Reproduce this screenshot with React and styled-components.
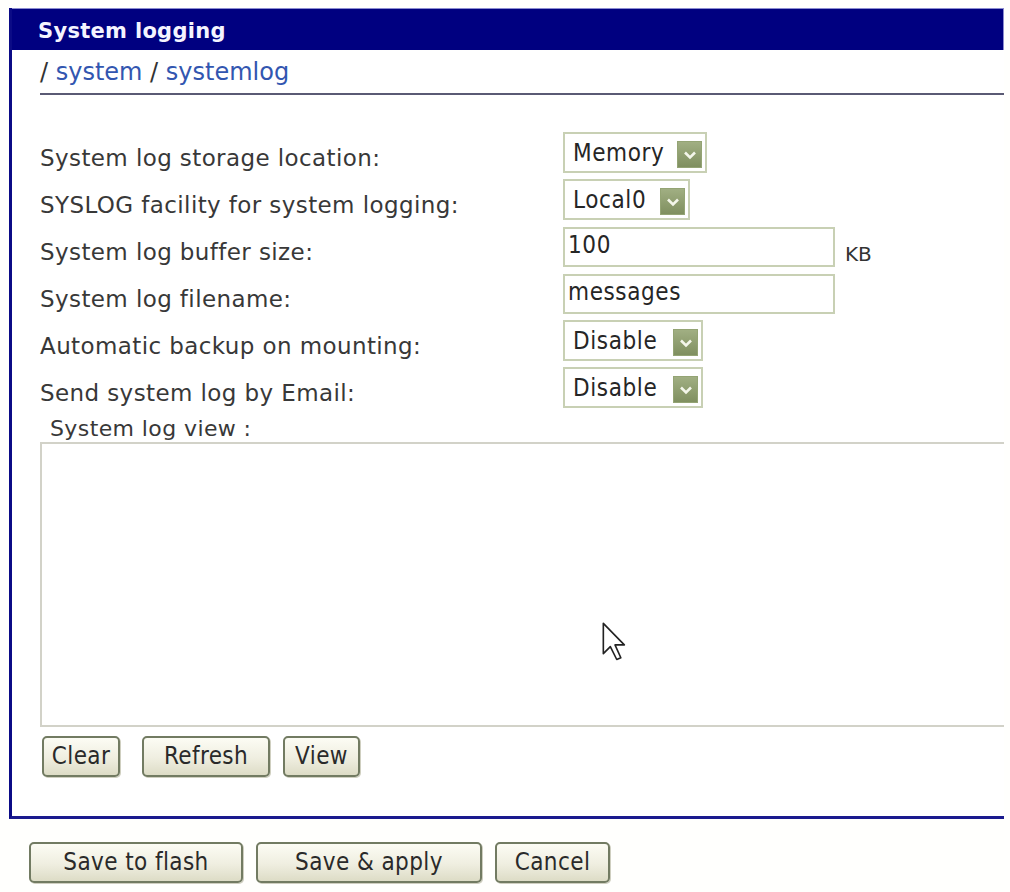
import React from 'react';
import styled, { createGlobalStyle } from 'styled-components';

const GlobalStyle = createGlobalStyle`
	html, body {
		margin: 0;
		padding: 0;
		background: #fffffd;
	}
	body {
		font-family: "DejaVu Sans", Verdana, sans-serif;
		color: #333;
	}
`;

const rows = [
	{ label: 'System log storage location:', kind: 'select', value: 'Memory', w: 144 },
	{ label: 'SYSLOG facility for system logging:', kind: 'select', value: 'Local0', w: 127 },
	{ label: 'System log buffer size:', kind: 'input', value: '100', unit: 'KB' },
	{ label: 'System log filename:', kind: 'input', value: 'messages' },
	{ label: 'Automatic backup on mounting:', kind: 'select', value: 'Disable', w: 140 },
	{ label: 'Send system log by Email:', kind: 'select', value: 'Disable', w: 140 },
];

function Chevron() {
	return (
		<svg width="14" height="10" viewBox="0 0 14 10">
			<polyline points="2,2.5 7,7.5 12,2.5" fill="none" stroke="#f4f6ea" strokeWidth="2.6" />
		</svg>
	);
}

function Cursor() {
	return (
		<svg width="28" height="42" viewBox="0 0 24 36">
			<path
				d="M2,2 L2,28 L8,22 L13.5,33 L17,31.5 L12,20.5 L20,20.5 Z"
				fill="#fff"
				stroke="#222"
				strokeWidth="1.4"
				strokeLinejoin="round"
			/>
		</svg>
	);
}

export default function App() {
	return (
		<Page>
			<GlobalStyle />
			<Panel>
				<Header>System logging</Header>
				<Crumbs>
					/ <CrumbLink>system</CrumbLink> / <CrumbLink>systemlog</CrumbLink>
				</Crumbs>
				<Rule />
				<Form>
					{rows.map(row => (
						<React.Fragment key={row.label}>
							<Label>{row.label}</Label>
							<Control>
								{row.kind === 'select' ? (
									<SelectBox $w={row.w}>
										<SelectText>{row.value}</SelectText>
										<Arrow>
											<Chevron />
										</Arrow>
									</SelectBox>
								) : (
									<TextBox readOnly defaultValue={row.value} />
								)}
								{row.unit && <Unit>{row.unit}</Unit>}
							</Control>
						</React.Fragment>
					))}
				</Form>
				<ViewLabel>System log view :</ViewLabel>
				<LogView readOnly />
				<ButtonRow>
					<Button $w={78}>Clear</Button>
					<Button $w={128} $ml={22}>Refresh</Button>
					<Button $w={77} $ml={13}>View</Button>
				</ButtonRow>
			</Panel>
			<Footer>
				<Button $w={214}>Save to flash</Button>
				<Button $w={226} $ml={13}>Save &amp; apply</Button>
				<Button $w={115} $ml={13}>Cancel</Button>
			</Footer>
			<Pointer>
				<Cursor />
			</Pointer>
		</Page>
	);
}

const Page = styled.div`
	position: relative;
	width: 1010px;
	height: 892px;
	box-sizing: border-box;
	padding: 8px 6px 0 9px;
	overflow: hidden;
`;

const Panel = styled.section`
	height: 811px;
	box-sizing: border-box;
	display: flex;
	flex-direction: column;
	border-left: 3px solid #0b0b86;
	border-bottom: 3px solid #1a1a8e;
	background: #fff;
	overflow: hidden;
`;

const Header = styled.div`
	height: 42px;
	display: flex;
	align-items: center;
	padding: 3px 0 0 26px;
	box-sizing: border-box;
	background: #000080;
	box-shadow: inset 0 1px 0 #8c8cd0, inset -1px 0 0 #8c8cd0;
	color: #f4f4ff;
	font-family: "DejaVu Sans", Verdana, sans-serif;
	font-weight: bold;
	font-size: 21px;
	letter-spacing: 0.3px;
`;

const Crumbs = styled.div`
	margin: 8px 0 0 28px;
	height: 28px;
	line-height: 28px;
	font-size: 24px;
	color: #333;
`;

const CrumbLink = styled.span`
	color: #3256b0;
`;

const Rule = styled.div`
	margin: 7px 0 0 28px;
	height: 2px;
	background: #5a5a74;
`;

const Form = styled.div`
	display: grid;
	grid-template-columns: 523px 1fr;
	grid-auto-rows: 41px;
	row-gap: 6px;
	margin: 37px 0 0 28px;
`;

const Label = styled.div`
	align-self: center;
	padding-top: 11px;
	font-size: 23px;
	letter-spacing: 0.4px;
	color: #383838;
	white-space: nowrap;
`;

const Control = styled.div`
	display: flex;
	align-items: center;
	gap: 10px;
`;

const SelectBox = styled.div`
	width: ${p => p.$w}px;
	height: 41px;
	box-sizing: border-box;
	display: flex;
	justify-content: space-between;
	padding: 0 3px 0 8px;
	border: 2px solid #c8d0b4;
	background: #fff;
`;

const SelectText = styled.span`
	align-self: center;
	font-family: "DejaVu Sans Condensed", "DejaVu Sans", sans-serif;
	font-stretch: condensed;
	font-size: 24px;
	letter-spacing: 0.6px;
	color: #262626;
`;

const Arrow = styled.span`
	align-self: flex-end;
	margin-bottom: 3px;
	width: 25px;
	height: 27px;
	display: flex;
	align-items: center;
	justify-content: center;
	background: linear-gradient(#a2b084, #7e8e5e);
	box-shadow: inset 0 0 0 1px #94a474;
`;

const TextBox = styled.input`
	width: 272px;
	height: 40px;
	box-sizing: border-box;
	padding: 0 0 4px 3px;
	border: 2px solid #c8d0b4;
	outline: none;
	background: #fff;
	font-family: "DejaVu Sans Condensed", "DejaVu Sans", sans-serif;
	font-stretch: condensed;
	font-size: 24px;
	letter-spacing: 0.6px;
	color: #262626;
`;

const Unit = styled.span`
	padding-top: 14px;
	font-size: 20px;
	color: #333;
`;

const ViewLabel = styled.div`
	margin: 8px 0 0 38px;
	height: 26px;
	line-height: 26px;
	font-size: 22px;
	letter-spacing: 0.4px;
	color: #383838;
`;

const LogView = styled.textarea`
	flex: none;
	margin: 0 0 0 28px;
	width: 1000px;
	height: 285px;
	box-sizing: border-box;
	border: 2px solid #d2d2c8;
	outline: none;
	resize: none;
	background: #fff;
`;

const ButtonRow = styled.div`
	display: flex;
	margin: 9px 0 0 30px;
`;

const Button = styled.button`
	flex: none;
	width: ${p => p.$w}px;
	height: 41px;
	margin-left: ${p => p.$ml || 0}px;
	padding: 0 0 2px;
	box-sizing: border-box;
	border: 2px solid #727b62;
	border-radius: 5px;
	background: linear-gradient(#fcfcf4, #efeee0 55%, #dddcc6);
	box-shadow: 1px 1px 0 #cfcfc0;
	font-family: "DejaVu Sans Condensed", "DejaVu Sans", sans-serif;
	font-stretch: condensed;
	font-size: 24px;
	letter-spacing: 0.4px;
	color: #2a2a2a;
`;

const Footer = styled.div`
	display: flex;
	margin: 23px 0 0 20px;
`;

const Pointer = styled.div`
	position: absolute;
	left: 601px;
	top: 621px;
	line-height: 0;
`;
